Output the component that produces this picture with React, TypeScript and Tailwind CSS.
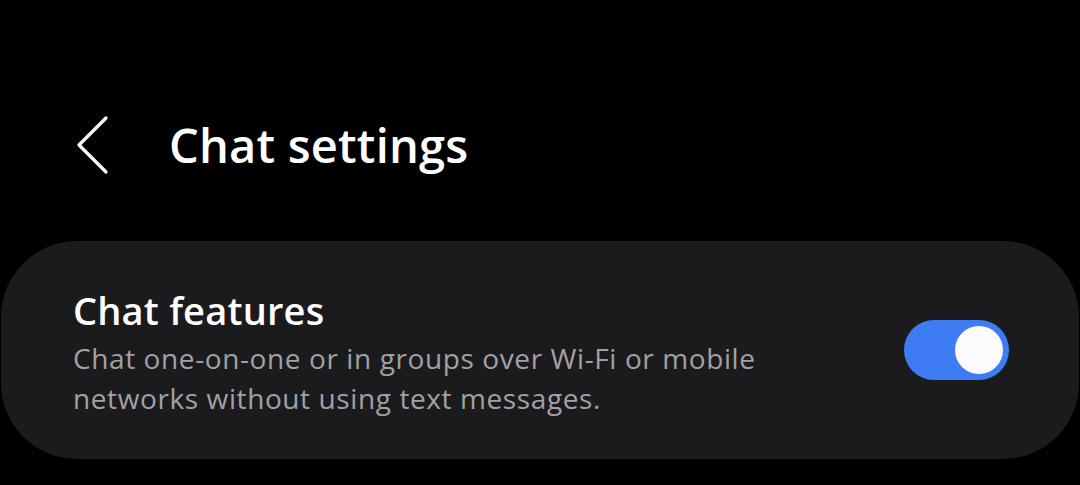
function Toggle({ on }: { on: boolean }) {
  return (
    <div
      className={`flex h-[60px] w-[105px] shrink-0 items-center rounded-full px-[6px] ${
        on ? 'justify-end bg-[#3e7cf4]' : 'justify-start bg-[#5a5a5e]'
      }`}
    >
      <span className="h-[48px] w-[48px] rounded-full bg-[#fcfcff]" />
    </div>
  );
}

function BackIcon() {
  return (
    <svg width="34" height="60" viewBox="0 0 34 60" fill="none" stroke="currentColor" strokeWidth="3.2" strokeLinecap="round" strokeLinejoin="round">
      <polyline points="30,3 3,30 30,57" />
    </svg>
  );
}

export default function App() {
  return (
    <div
      className="h-[485px] w-[1080px] overflow-hidden bg-black text-white"
      style={{ fontFamily: '"Open Sans", "Noto Sans", sans-serif' }}
    >
      <header className="flex h-[241px] items-start pt-[112px]">
        <button type="button" className="ml-[76px] flex h-[66px] w-[34px] items-center justify-center text-white">
          <BackIcon />
        </button>
        <h1 className="ml-[59px] text-[47px] font-semibold leading-[66px] tracking-[0.2px]">Chat settings</h1>
      </header>
      <section className="mx-[1px] flex h-[218px] items-center rounded-[76px] bg-[#1b1b1d] pl-[72px] pr-[70px]">
        <div className="flex-1 pt-[5px]">
          <h2 className="text-[38px] font-semibold leading-[46px] tracking-[0.2px]">Chat features</h2>
          <p className="mt-[5px] text-[28px] leading-[40px] tracking-[0.6px] text-[#a1a1a5]">
            Chat one-on-one or in groups over Wi-Fi or mobile
            <br />
            networks without using text messages.
          </p>
        </div>
        <Toggle on />
      </section>
    </div>
  );
}
